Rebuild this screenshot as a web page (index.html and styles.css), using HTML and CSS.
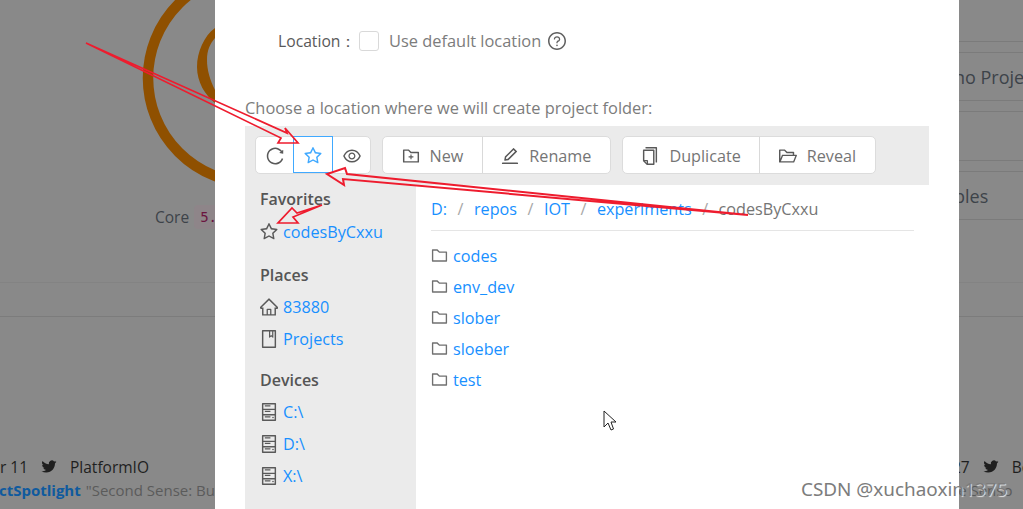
FILE: index.html
```html
<!DOCTYPE html>
<html lang="en">

<head>
  <meta charset="UTF-8">
  <meta name="viewport" content="width=device-width, initial-scale=1.0">
  <title>Import Arduino Project</title>
  <link rel="stylesheet" href="styles.css">
</head>

<body>
  <svg class="sprite" xmlns="http://www.w3.org/2000/svg">
    <symbol id="i-reload" viewBox="64 64 896 896"><path d="M909.1 209.3l-56.4 44.1C775.8 155.1 656.2 92 521.9 92 290 92 102.3 279.5 102 511.5 101.7 743.7 289.8 932 521.9 932c181.3 0 335.8-115 394.6-276.1 1.5-4.2-.7-8.9-4.9-10.3l-56.7-19.5a8 8 0 0 0-10.1 4.8c-1.8 5-3.8 10-5.9 14.9-17.3 41-42.1 77.8-73.7 109.4A344.77 344.77 0 0 1 655.9 829c-42.3 17.9-87.4 27-133.8 27-46.5 0-91.5-9.1-133.8-27A341.5 341.5 0 0 1 279 755.2a342.16 342.16 0 0 1-73.7-109.4c-17.9-42.4-27-87.4-27-133.9s9.1-91.5 27-133.9c17.3-41 42.1-77.8 73.7-109.4 31.6-31.6 68.4-56.4 109.3-73.8 42.3-17.9 87.4-27 133.8-27 46.5 0 91.5 9.1 133.8 27a341.5 341.5 0 0 1 109.3 73.8c9.9 9.9 19.2 20.4 27.8 31.4l-60.2 47a8 8 0 0 0 3 14.1l175.6 43c5 1.2 9.9-2.6 9.9-7.7l.8-180.9c-.1-6.6-7.8-10.3-13-6.2z"/></symbol>
    <symbol id="i-star" viewBox="64 64 896 896"><path d="M908.1 353.1l-253.9-36.9L540.7 86.1c-3.1-6.3-8.2-11.4-14.5-14.5-15.8-7.8-35-1.3-42.9 14.5L369.8 316.2l-253.9 36.9c-7 1-13.4 4.3-18.3 9.3a32.05 32.05 0 0 0 .6 45.3l183.7 179.1-43.4 252.9a31.95 31.95 0 0 0 46.4 33.7L512 754l227.1 119.4c6.2 3.3 13.4 4.4 20.3 3.2 17.4-3 29.1-19.5 26.1-36.9l-43.4-252.9 183.7-179.1c5-4.9 8.3-11.3 9.3-18.3 2.7-17.5-9.5-33.7-27-36.3zM664.8 561.6l36.1 210.3L512 672.7 323.1 772l36.1-210.3-152.8-149L417.6 382 512 190.7 606.4 382l211.2 30.7-152.8 148.9z"/></symbol>
    <symbol id="i-eye" viewBox="64 64 896 896"><path d="M942.2 486.2C847.4 286.5 704.1 186 512 186c-192.2 0-335.4 100.5-430.2 300.3a60.3 60.3 0 0 0 0 51.5C176.6 737.5 319.9 838 512 838c192.2 0 335.4-100.5 430.2-300.3 7.7-16.2 7.7-35 0-51.5zM512 766c-161.3 0-279.4-81.8-362.7-254C232.6 339.8 350.7 258 512 258c161.3 0 279.4 81.8 362.7 254C791.5 684.2 673.4 766 512 766zm-4-430c-97.2 0-176 78.8-176 176s78.8 176 176 176 176-78.8 176-176-78.8-176-176-176zm0 288c-61.9 0-112-50.1-112-112s50.1-112 112-112 112 50.1 112 112-50.1 112-112 112z"/></symbol>
    <symbol id="i-folder" viewBox="64 64 896 896"><path d="M880 298.4H521L403.7 186.2a8.15 8.15 0 0 0-5.5-2.2H144c-17.7 0-32 14.3-32 32v592c0 17.7 14.3 32 32 32h736c17.7 0 32-14.3 32-32V330.4c0-17.7-14.3-32-32-32zM840 768H184V256h188.5l119.6 114.4H840V768z"/></symbol>
    <symbol id="i-folder-add" viewBox="64 64 896 896"><path d="M484 443.1V528h-84.5c-4.1 0-7.5 3.1-7.5 7v42c0 3.8 3.4 7 7.5 7H484v84.9c0 3.9 3.2 7.1 7 7.1h42c3.9 0 7-3.2 7-7.1V584h84.5c4.1 0 7.5-3.2 7.5-7v-42c0-3.9-3.4-7-7.5-7H540v-84.9c0-3.9-3.1-7.1-7-7.1h-42c-3.8 0-7 3.2-7 7.1z"/><path d="M880 298.4H521L403.7 186.2a8.15 8.15 0 0 0-5.5-2.2H144c-17.7 0-32 14.3-32 32v592c0 17.7 14.3 32 32 32h736c17.7 0 32-14.3 32-32V330.4c0-17.7-14.3-32-32-32zM840 768H184V256h188.5l119.6 114.4H840V768z"/></symbol>
    <symbol id="i-folder-open" viewBox="64 64 896 896"><path d="M928 444H820V330.4c0-17.7-14.3-32-32-32H473L355.7 186.2a8.15 8.15 0 0 0-5.5-2.2H96c-17.7 0-32 14.3-32 32v592c0 17.7 14.3 32 32 32h698c13 0 24.8-7.9 29.7-20l134-332c1.5-3.8 2.3-7.9 2.3-12 0-17.7-14.3-32-32-32zM136 256h188.5l119.6 114.4H748V444H238c-13 0-24.8 7.9-29.7 20L136 643.2V256zm635.3 512H159l103.3-256h612.4L771.3 768z"/></symbol>
    <symbol id="i-edit" viewBox="64 64 896 896"><path d="M257.7 752c2 0 4-.2 6-.5L431.9 722c2-.4 3.9-1.3 5.3-2.8l423.9-423.9a9.96 9.96 0 0 0 0-14.1L694.9 114.9c-1.9-1.9-4.4-2.9-7.1-2.9s-5.2 1-7.1 2.9L256.8 538.8c-1.5 1.5-2.4 3.3-2.8 5.3l-29.5 168.2a33.5 33.5 0 0 0 9.4 29.8c6.6 6.4 14.9 9.9 23.8 9.9zm67.4-174.4L687.8 215l73.3 73.3-362.7 362.6-88.9 15.7 15.6-89zM880 836H144c-17.7 0-32 14.3-32 32v36c0 4.4 3.6 8 8 8h784c4.4 0 8-3.6 8-8v-36c0-17.7-14.3-32-32-32z"/></symbol>
    <symbol id="i-copy" viewBox="64 64 896 896"><path d="M832 64H296c-4.4 0-8 3.6-8 8v56c0 4.4 3.6 8 8 8h496v688c0 4.4 3.6 8 8 8h56c4.4 0 8-3.6 8-8V96c0-17.7-14.3-32-32-32zM704 192H192c-17.7 0-32 14.3-32 32v530.7c0 8.5 3.4 16.6 9.4 22.6l173.3 173.3c2.2 2.2 4.7 4 7.4 5.5v1.9h4.2c3.5 1.3 7.2 2 11 2H704c17.7 0 32-14.3 32-32V224c0-17.7-14.3-32-32-32zM350 856.2L263.9 770H350v86.2zM664 888H414V746c0-22.1-17.9-40-40-40H232V264h432v624z"/></symbol>
    <symbol id="i-home" viewBox="64 64 896 896"><path d="M946.5 505L560.1 118.8l-25.9-25.9a31.5 31.5 0 0 0-44.4 0L77.5 505a63.9 63.9 0 0 0-18.8 46c.4 35.2 29.7 63.3 64.9 63.3h42.5V940h691.8V614.3h43.4c17.1 0 33.2-6.7 45.3-18.8a63.6 63.6 0 0 0 18.7-45.3c0-17-6.7-33.1-18.8-45.2zM568 868H456V664h112v204zm217.9-325.7V868H632V640c0-22.1-17.9-40-40-40H432c-22.1 0-40 17.9-40 40v228H238.1V542.3h-96l370-369.7 23.1 23.1L882 542.3h-96.1z"/></symbol>
    <symbol id="i-book" viewBox="64 64 896 896"><path d="M832 64H192c-17.7 0-32 14.3-32 32v832c0 17.7 14.3 32 32 32h640c17.7 0 32-14.3 32-32V96c0-17.7-14.3-32-32-32zm-260 72h96v209.9L621.5 312 572 347.4V136zm220 752H232V136h280v296.9c0 3.3 1 6.6 3 9.3a15.9 15.9 0 0 0 22.3 3.7l83.8-59.9 81.4 59.4c2.7 2 6 3.1 9.4 3.1 8.8 0 16-7.2 16-16V136h64v752z"/></symbol>
    <symbol id="i-hdd" viewBox="64 64 896 896"><path d="M832 64H192c-17.7 0-32 14.3-32 32v832c0 17.7 14.3 32 32 32h640c17.7 0 32-14.3 32-32V96c0-17.7-14.3-32-32-32zm-600 72h560v208H232V136zm560 480H232V408h560v208zm0 272H232V680h560v208zM312 240h264c4.4 0 8-3.6 8-8v-48c0-4.4-3.6-8-8-8H312c-4.4 0-8 3.6-8 8v48c0 4.4 3.6 8 8 8zm0 272h264c4.4 0 8-3.6 8-8v-48c0-4.4-3.6-8-8-8H312c-4.4 0-8 3.6-8 8v48c0 4.4 3.6 8 8 8zm0 272h264c4.4 0 8-3.6 8-8v-48c0-4.4-3.6-8-8-8H312c-4.4 0-8 3.6-8 8v48c0 4.4 3.6 8 8 8z"/><circle cx="712" cy="784" r="40"/></symbol>
    <symbol id="i-question" viewBox="64 64 896 896"><path d="M512 64C264.6 64 64 264.6 64 512s200.6 448 448 448 448-200.6 448-448S759.4 64 512 64zm0 820c-205.4 0-372-166.6-372-372s166.6-372 372-372 372 166.6 372 372-166.6 372-372 372z"/><path d="M623.6 316.7C593.6 290.4 554 276 512 276s-81.6 14.5-111.6 40.7C369.2 344 352 380.7 352 420v7.6c0 4.4 3.6 8 8 8h48c4.4 0 8-3.6 8-8V420c0-44.1 43.1-80 96-80s96 35.9 96 80c0 31.1-22 59.6-56.1 72.7-21.2 8.1-39.2 22.3-52.1 40.9-13.1 19-19.9 41.8-19.9 64.9V620c0 4.4 3.6 8 8 8h48c4.4 0 8-3.6 8-8v-22.7a48.3 48.3 0 0 1 30.9-44.8c59-22.7 97.1-74.7 97.1-132.5.1-39.3-17.1-76-48.3-103.3zM472 732a40 40 0 1 0 80 0 40 40 0 1 0-80 0z"/></symbol>
    <symbol id="i-twitter" viewBox="0 0 24 24"><path d="M23.95 4.57a10 10 0 0 1-2.82.77 4.96 4.96 0 0 0 2.16-2.72c-.95.55-2 .95-3.12 1.18a4.92 4.92 0 0 0-8.38 4.48C7.69 8.1 4.07 6.13 1.64 3.16a4.9 4.9 0 0 0 1.52 6.57 4.9 4.9 0 0 1-2.23-.61v.06a4.92 4.92 0 0 0 3.95 4.83 5 5 0 0 1-2.21.08 4.94 4.94 0 0 0 4.6 3.42A9.87 9.87 0 0 1 0 19.54a13.94 13.94 0 0 0 7.55 2.21c9.05 0 14-7.5 14-13.98 0-.21 0-.42-.02-.63a9.94 9.94 0 0 0 2.46-2.55z"/></symbol>
  </svg>

  <!-- dimmed home page behind the dialog -->
  <div class="backdrop">
    <div class="bd_top">
      <div class="bd_left">
        <svg class="logo" viewBox="0 0 215 190" xmlns="http://www.w3.org/2000/svg">
          <circle cx="253" cy="78" r="105" fill="none" stroke="#8f5000" stroke-width="10.5"/>
          <path fill="#8f5000" d="M215 28C204 36 197 52 197 67C197 82 205 95 215 103L215 90C210 80 207 70 207 60C207 50 210 44 215 38Z"/>
        </svg>
        <div class="core"><span>Core</span><code>5.2</code></div>
      </div>
      <div class="bd_right">
        <div class="bd_item bd_item_first"></div>
        <div class="bd_item">no Project</div>
        <div class="bd_item bd_item_tall"></div>
        <div class="bd_item">bles</div>
      </div>
    </div>
    <div class="bd_band"></div>
    <div class="bd_news">
      <div class="news_left">
        <div class="tweet_head">
          <span>December 11</span>
          <svg class="bird"><use href="#i-twitter"/></svg>
          <span>PlatformIO</span>
        </div>
        <div class="tweet_text"><b>#ProjectSpotlight</b> "Second Sense: Bu</div>
      </div>
      <div class="news_right">
        <div class="tweet_head">
          <span>27</span>
          <svg class="bird"><use href="#i-twitter"/></svg>
          <span>Bo</span>
        </div>
        <div class="tweet_text">re Senso</div>
      </div>
    </div>
  </div>

  <article class="dialog">
    <div class="loc_row">
      <span class="loc_label">Location：</span>
      <span class="check"></span>
      <span class="loc_text">Use default location</span>
      <svg class="ic ic_help"><use href="#i-question"/></svg>
    </div>
    <p class="hint">Choose a location where we will create project folder:</p>

    <section class="browser">
      <div class="toolbar">
        <div class="btn_group">
          <button class="btn btn_icon"><svg class="ic"><use href="#i-reload"/></svg></button>
          <button class="btn btn_icon on"><svg class="ic"><use href="#i-star"/></svg></button>
          <button class="btn btn_icon"><svg class="ic"><use href="#i-eye"/></svg></button>
        </div>
        <div class="btn_group">
          <button class="btn"><svg class="ic"><use href="#i-folder-add"/></svg>New</button>
          <button class="btn"><svg class="ic"><use href="#i-edit"/></svg>Rename</button>
        </div>
        <div class="btn_group">
          <button class="btn"><svg class="ic"><use href="#i-copy"/></svg>Duplicate</button>
          <button class="btn"><svg class="ic"><use href="#i-folder-open"/></svg>Reveal</button>
        </div>
      </div>

      <div class="browser_body">
        <aside class="side">
          <h3>Favorites</h3>
          <ul>
            <li><svg class="ic"><use href="#i-star"/></svg><a>codesByCxxu</a></li>
          </ul>
          <h3>Places</h3>
          <ul>
            <li><svg class="ic"><use href="#i-home"/></svg><a>83880</a></li>
            <li><svg class="ic"><use href="#i-book"/></svg><a>Projects</a></li>
          </ul>
          <h3>Devices</h3>
          <ul>
            <li><svg class="ic"><use href="#i-hdd"/></svg><a>C:\</a></li>
            <li><svg class="ic"><use href="#i-hdd"/></svg><a>D:\</a></li>
            <li><svg class="ic"><use href="#i-hdd"/></svg><a>X:\</a></li>
          </ul>
        </aside>

        <div class="files">
          <nav class="crumbs">
            <a>D:</a><i>/</i><a>repos</a><i>/</i><a>IOT</a><i>/</i><a>experiments</a><i>/</i><span>codesByCxxu</span>
          </nav>
          <ul class="file_list">
            <li><svg class="ic"><use href="#i-folder"/></svg><a>codes</a></li>
            <li><svg class="ic"><use href="#i-folder"/></svg><a>env_dev</a></li>
            <li><svg class="ic"><use href="#i-folder"/></svg><a>slober</a></li>
            <li><svg class="ic"><use href="#i-folder"/></svg><a>sloeber</a></li>
            <li><svg class="ic"><use href="#i-folder"/></svg><a>test</a></li>
          </ul>
        </div>
      </div>
    </section>
  </article>

  <!-- hand drawn arrows and mouse pointer on top of the screenshot -->
  <svg class="marks" viewBox="0 0 1023 509" xmlns="http://www.w3.org/2000/svg">
    <g fill="none" stroke="#ee1c2e" stroke-width="1.7" stroke-linejoin="miter">
      <path d="M86 43L287 133L285 128L298 143L278 143L281 138Z"/>
      <path d="M748 215L347 174L345 168L327 174L344 185L343 179Z" stroke-width="2"/>
      <path d="M322 205L297 213L292 208L278 223L298 223L293 217Z"/>
    </g>
    <path d="M604 411V427L608 423L611 430L613.500 429L611 422H616Z" fill="#fff" stroke="#222" stroke-width="1"/>
  </svg>
  <div class="watermark">CSDN @xuchaoxin1375</div>
</body>

</html>
```

FILE: styles.css
```css
* {
  box-sizing: border-box;
  margin: 0;
}

html,
body {
  height: 100%;
}

body {
  position: relative;
  overflow: hidden;
  background: #898989;
  font-family: "Open Sans", "Noto Sans", sans-serif;
  font-size: 15.5px;
  line-height: 24px;
}

ul {
  list-style: none;
  padding: 0;
}

a {
  color: #1890ff;
}

.sprite {
  display: none;
}

.ic {
  display: block;
  flex: none;
  width: 18px;
  height: 18px;
  fill: currentColor;
}

/* 뒤쪽 페이지 */
.backdrop {
  position: absolute;
  inset: 0;
  display: flex;
  flex-direction: column;
  color: #3d4349;
}

.bd_top {
  display: flex;
  justify-content: space-between;
  height: 282px;
}

.bd_left {
  width: 215px;
}

.logo {
  display: block;
  width: 215px;
  height: 190px;
}

.core {
  display: flex;
  align-items: center;
  gap: 5px;
  height: 23px;
  margin-top: 15px;
  padding-left: 155px;
}

.core code {
  padding: 0 6px;
  border-radius: 4px;
  background: #8e8589;
  color: #6b1540;
  font-family: "DejaVu Sans Mono", monospace;
  font-size: 14px;
}

.bd_right {
  display: flex;
  flex-direction: column;
  gap: 10px;
  width: 73px;
  padding-top: 41px;
  white-space: nowrap;
  overflow: hidden;
  font-size: 18px;
}

.bd_item {
  height: 49px;
  padding: 12px 0 0 4px;
  border-top: 1px solid #7b7b7b;
  border-bottom: 1px solid #7b7b7b;
}

.bd_item_first {
  height: 1px;
  padding: 0;
  border-bottom: 0;
}

.bd_item_tall {
  height: 50px;
}

.bd_band {
  height: 35px;
  border-top: 1px solid #838383;
  border-bottom: 1px solid #7c7c7c;
}

.bd_news {
  display: flex;
  justify-content: space-between;
  padding-top: 138px;
  white-space: nowrap;
  overflow: hidden;
}

.news_left {
  width: 215px;
}

.news_right {
  width: 71px;
  overflow: hidden;
}

.tweet_head {
  display: flex;
  align-items: center;
  gap: 13px;
  height: 23px;
  color: #1f1f1f;
}

.news_left .tweet_head {
  justify-content: flex-end;
  padding-right: 66px;
}

.bird {
  flex: none;
  width: 16px;
  height: 15px;
  fill: #1f1f1f;
}

.tweet_text {
  display: flex;
  justify-content: flex-end;
  gap: 5px;
  height: 23px;
  color: #5b5b5b;
  font-size: 15px;
}

.news_right .tweet_text {
  justify-content: flex-start;
}

.tweet_text b {
  color: #0f5a9e;
}

/* 대화상자 */
.dialog {
  position: absolute;
  top: 0;
  bottom: 0;
  left: 215px;
  width: 744px;
  padding: 0 30px;
  overflow: hidden;
  background: #fff;
  font-size: 16.2px;
}

.loc_row {
  display: flex;
  align-items: center;
  height: 82px;
  padding-left: 33px;
  color: #7c7c7c;
  font-size: 16.4px;
}

.loc_label {
  width: 81px;
  color: #595959;
  font-size: 15.7px;
  white-space: nowrap;
}

.check {
  width: 20px;
  height: 20px;
  margin-right: 10px;
  border: 1px solid #d9d9d9;
  border-radius: 3px;
}

.ic_help {
  margin-left: 7px;
  color: #5f5f5f;
}

.hint {
  margin-top: 14px;
  color: #7c7c7c;
  font-size: 16.4px;
}

.browser {
  margin-top: 6px;
}

.toolbar {
  display: flex;
  gap: 11px;
  height: 59px;
  padding: 10px;
  background: #ebebeb;
}

.btn_group {
  display: flex;
  height: 38px;
  border: 1px solid #dcdcdc;
  border-radius: 5px;
  background: #fff;
}

.btn {
  display: flex;
  align-items: center;
  gap: 10px;
  padding: 2px 18.500px 0;
  border: 0;
  border-left: 1px solid #d9d9d9;
  background: none;
  color: #757575;
  font: inherit;
}

.btn:first-child {
  border-left: 0;
}

.btn .ic {
  color: #595959;
}

.btn_icon {
  justify-content: center;
  width: 37px;
  padding: 2px 0 0;
  border-left: 0;
}

.btn.on {
  width: 40px;
  margin: -1px 0 0;
  border: 1px solid #40a9ff;
}

.btn.on .ic {
  color: #40a9ff;
}

.browser_body {
  display: flex;
  height: 324px;
}

.side {
  width: 171px;
  padding: 2px 0 0 15px;
  background: #ebebeb;
}

.side h3 {
  margin-bottom: 4px;
  color: #555;
  font-size: 16px;
  font-weight: 600;
}

.side h3:first-child {
  margin-bottom: 5px;
}

.side ul {
  margin-bottom: 15px;
}

.side ul:nth-of-type(2) {
  margin-bottom: 13px;
}

.side li {
  display: flex;
  align-items: center;
  gap: 5px;
  height: 32px;
  white-space: nowrap;
}

.side .ic {
  color: #595959;
}

.files {
  flex: 1;
  padding: 12px 15px 0;
}

.crumbs {
  display: flex;
  height: 34px;
  border-bottom: 1px solid #e5e5e5;
  color: #757575;
}

.crumbs i {
  margin: 0 10.500px;
  font-style: normal;
  color: #a8a8a8;
}

.file_list {
  margin-top: 9px;
}

.file_list li {
  display: flex;
  align-items: center;
  gap: 5px;
  height: 31px;
}

.file_list .ic {
  width: 17px;
  height: 17px;
  color: #707070;
}

/* 위에 그린 화살표 */
.marks {
  position: absolute;
  inset: 0;
  width: 100%;
  height: 100%;
  pointer-events: none;
}

.watermark {
  position: absolute;
  top: 477px;
  left: 801px;
  color: #7c7c7c;
  font-family: "Noto Sans", sans-serif;
  font-size: 18.900px;
  text-shadow: 1px 1px 1px rgba(255, 255, 255, 0.8);
  white-space: nowrap;
}
```
